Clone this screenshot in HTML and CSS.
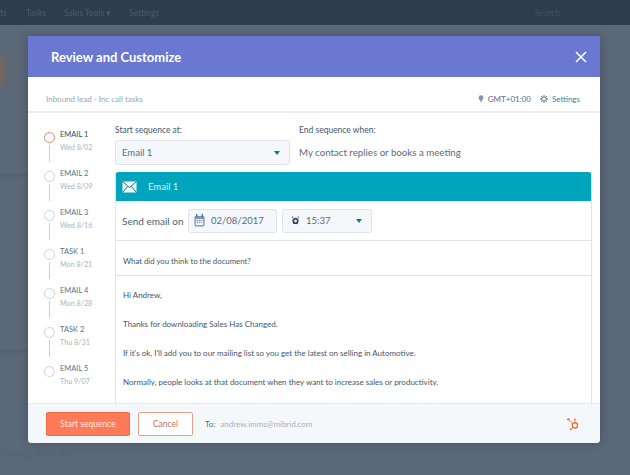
FILE: index.html
```html
<!DOCTYPE html>
<html lang="en">
<head>
  <meta charset="UTF-8">
  <title>Review and Customize</title>
  <link rel="stylesheet" href="styles.css">
</head>
<body>
  <div class="page">
    <div class="topnav">
      <span class="nav-cut">ts</span>
      <span>Tasks</span>
      <span>Sales Tools &#9662;</span>
      <span>Settings</span>
      <span class="nav-search">Search</span>
    </div>
    <div class="page-blob"></div>
    <div class="page-rule rule-one"></div>
    <div class="page-rule rule-two"></div>
    <div class="page-line">Contacts in this list</div>
  </div>

  <div class="modal">
    <div class="modal-head">
      <h1>Review and Customize</h1>
      <svg class="close" width="12" height="12" viewBox="0 0 12 12"><path d="M1 1l10 10M11 1L1 11" stroke="#fff" stroke-width="1.5" fill="none"/></svg>
    </div>

    <div class="subhead">
      <span class="sub-name">Inbound lead - Inc call tasks</span>
      <span class="sub-right">
        <svg width="6" height="8" viewBox="0 0 8 10"><path d="M4 0a3.200 3.200 0 0 1 3.200 3.200C7.200 5 5.500 6 5 7.500H3C2.500 6 .8 5 .8 3.200A3.200 3.200 0 0 1 4 0z" fill="#7c98b6"/><path d="M3 8.500h2" stroke="#7c98b6"/></svg>
        <span class="gmt">GMT+01:00</span>
        <svg width="8" height="8" viewBox="0 0 10 10"><circle cx="5" cy="5" r="2.800" fill="none" stroke="#33475b"/><path d="M5 0v2M5 8v2M0 5h2M8 5h2M1.500 1.500l1.300 1.300M7.200 7.200l1.300 1.300M8.500 1.500L7.200 2.800M2.800 7.200L1.500 8.500" stroke="#33475b" stroke-width=".9"/></svg>
        <a class="settings">Settings</a>
      </span>
    </div>

    <div class="modal-body">
      <ul class="timeline">
        <li class="step current"><span class="dot"></span><div><b>EMAIL 1</b><i>Wed 8/02</i></div></li>
        <li class="step"><span class="dot"></span><div><b>EMAIL 2</b><i>Wed 8/09</i></div></li>
        <li class="step"><span class="dot"></span><div><b>EMAIL 3</b><i>Wed 8/16</i></div></li>
        <li class="step"><span class="dot"></span><div><b>TASK 1</b><i>Mon 8/21</i></div></li>
        <li class="step"><span class="dot"></span><div><b>EMAIL 4</b><i>Mon 8/28</i></div></li>
        <li class="step"><span class="dot"></span><div><b>TASK 2</b><i>Thu 8/31</i></div></li>
        <li class="step last"><span class="dot"></span><div><b>EMAIL 5</b><i>Thu 9/07</i></div></li>
      </ul>

      <div class="main">
        <div class="options">
          <div class="opt-start">
            <label>Start sequence at:</label>
            <div class="field select-start">Email 1<span class="caret"></span></div>
          </div>
          <div class="opt-end">
            <label>End sequence when:</label>
            <div class="end-text">My contact replies or books a meeting</div>
          </div>
        </div>

        <div class="card">
          <div class="card-head">
            <svg width="15" height="12" viewBox="0 0 15 12"><rect x=".5" y=".5" width="14" height="11" rx="1" fill="#f4fbfc"/><path d="M1 1l6.500 5.500L14 1M1 11l4.500-5.500M14 11L9.500 5.500" stroke="#00788c" fill="none"/></svg>
            <span>Email 1</span>
          </div>
          <div class="send-row">
            <span class="send-label">Send email on</span>
            <div class="field date-field">
              <svg width="11" height="13" viewBox="0 0 12 14"><rect x=".5" y="2" width="11" height="11.500" rx="1.500" fill="#7c98b6"/><rect x="2" y="5.500" width="8" height="6.500" fill="#f5f8fa"/><path d="M3 0v3.500M9 0v3.500" stroke="#516f90" stroke-width="1.500"/><path d="M3 7h1.500M5.500 7H7M8 7h1M3 9h1.500M5.500 9H7M8 9h1" stroke="#516f90"/></svg>
              <span>02/08/2017</span>
            </div>
            <div class="field time-field">
              <svg width="9" height="9" viewBox="0 0 11 11"><circle cx="5.500" cy="6" r="3.800" fill="#33475b"/><circle cx="5.500" cy="6" r="1.800" fill="#dfe3eb"/><path d="M1 2l1.800-1.200M10 2L8.200.8M2.500 10l1-1M8.500 10l-1-1" stroke="#33475b" stroke-width="1.200"/></svg>
              <span>15:37</span><span class="caret"></span>
            </div>
          </div>
          <div class="subject">What did you think to the document?</div>
          <div class="letter">
            <p>Hi Andrew,</p>
            <p>Thanks for downloading Sales Has Changed.</p>
            <p>If it's ok, I'll add you to our mailing list so you get the latest on selling in Automotive.</p>
            <p>Normally, people looks at that document when they want to increase sales or productivity.</p>
          </div>
        </div>
      </div>
    </div>

    <div class="modal-foot">
      <button class="btn-start">Start sequence</button>
      <button class="btn-cancel">Cancel</button>
      <span class="to">To:</span>
      <span class="to-mail">andrew.imms@mibrid.com</span>
      <svg class="sprocket" width="13" height="14" viewBox="0 0 14 15"><circle cx="8.500" cy="9" r="2.800" fill="none" stroke="#e8743b" stroke-width="1.500"/><path d="M8.500 6V3M6.300 7L2 3.200M6.500 11l-2 1.800" stroke="#e8743b"/><circle cx="8.500" cy="2.500" r="1" fill="#e8743b"/><circle cx="1.500" cy="2.500" r="1.300" fill="#e8743b"/><circle cx="4" cy="13.200" r="1" fill="#e8743b"/></svg>
    </div>
  </div>
</body>
</html>
```

FILE: styles.css
```css
* {
  box-sizing: border-box;
}
html, body {
  height: 100%;
}
body {
  margin: 0;
  overflow: hidden;
  font-family: Lato, "Open Sans", sans-serif;
  background: #5b6878;
  color: #33475b;
}
.page {
  height: 475px;
  filter: blur(0.6px);
}
.topnav {
  height: 25px;
  background: #2e3d4e;
  display: flex;
  align-items: center;
  padding-left: 26px;
  gap: 18px;
  font-size: 8.5px;
  color: #4a5b6d;
  position: relative;
}
.nav-cut {
  position: absolute;
  left: 0;
}
.nav-search {
  margin-left: auto;
  margin-right: 70px;
  color: #425266;
}
.page-blob {
  position: absolute;
  left: -12px;
  top: 54px;
  width: 17px;
  height: 32px;
  border-radius: 50%;
  background: #7d6557;
  filter: blur(3px);
}
.page-rule {
  height: 2px;
  width: 28px;
  background: #505c6b;
  filter: blur(1px);
}
.rule-one {
  margin-top: 149px;
}
.rule-two {
  margin-top: 174px;
}
.page-line {
  margin-top: 97px;
  font-size: 8.5px;
  color: #55616f;
}

.modal {
  position: absolute;
  left: 28px;
  top: 36px;
  width: 572px;
  height: 407px;
  background: #fff;
  border-radius: 0 0 4px 4px;
  box-shadow: 0 0 8px rgba(30, 40, 55, 0.35);
  display: flex;
  flex-direction: column;
  overflow: hidden;
}
.modal-head {
  height: 41px;
  flex: none;
  background: #6a78d1;
  display: flex;
  align-items: center;
  justify-content: space-between;
  padding: 0 13px 0 23px;
}
.modal-head h1 {
  margin: 0;
  font-size: 13px;
  font-weight: 700;
  color: #fff;
}
.subhead {
  height: 36px;
  flex: none;
  border-bottom: 2px solid #eaeef2;
  display: flex;
  align-items: center;
  justify-content: space-between;
  padding: 10px 20px 0 18px;
  font-size: 8px;
}
.sub-name {
  color: #99a5b1;
}
.sub-right {
  display: flex;
  align-items: center;
  gap: 4px;
}
.gmt {
  color: #516f90;
  margin-right: 5px;
}
.settings {
  color: #1f8a9e;
}

.modal-body {
  flex: 1;
  min-height: 0;
  display: flex;
}
.timeline {
  width: 87px;
  flex: none;
  margin: 0;
  padding: 16px 0 0 16px;
  list-style: none;
}
.step {
  height: 39px;
  display: flex;
  gap: 5px;
  position: relative;
}
.step::after {
  content: "";
  position: absolute;
  left: 5px;
  top: 16px;
  height: 17px;
  border-left: 1px solid #c3ced9;
}
.step.last::after {
  display: none;
}
.dot {
  width: 11px;
  height: 11px;
  margin-top: 3px;
  flex: none;
  border: 1.5px solid #ccd2d8;
  border-radius: 50%;
}
.current .dot {
  border-color: #dc8d62;
}
.step div {
  margin-top: -1px;
}
.step b {
  display: block;
  font-weight: 400;
  font-size: 7.5px;
  line-height: 13px;
  white-space: nowrap;
  color: #5f6f7f;
}
.current b {
  color: #33475b;
}
.step i {
  display: block;
  font-style: normal;
  font-size: 7.2px;
  line-height: 14px;
  white-space: nowrap;
  color: #a9b4be;
}

.main {
  flex: 1;
  min-width: 0;
  padding: 12px 8px 0 0;
  display: flex;
  flex-direction: column;
}
.options {
  display: flex;
  gap: 9px;
  height: 47px;
  flex: none;
}
.opt-start {
  width: 175px;
}
.options label {
  display: block;
  font-size: 8.5px;
  line-height: 11px;
  margin-bottom: 4px;
  color: #44566a;
}
.field {
  display: flex;
  align-items: center;
  background: #f5f8fa;
  border: 1px solid #dfe3eb;
  border-radius: 3px;
  font-size: 9.5px;
  color: #5a6b7b;
}
.select-start {
  height: 25px;
  padding: 0 6px;
  justify-content: space-between;
}
.end-text {
  font-size: 9.7px;
  line-height: 25px;
  color: #5a6b7b;
}
.caret {
  width: 0;
  height: 0;
  border-left: 3.5px solid transparent;
  border-right: 3.5px solid transparent;
  border-top: 4px solid #00818f;
  margin-right: 3px;
}
.card {
  flex: 1;
  min-height: 0;
  border-left: 1px solid #dfe3eb;
  border-right: 1px solid #dfe3eb;
  overflow: hidden;
}
.card-head {
  height: 29px;
  margin: 0 -1px;
  background: #00a4bd;
  border-radius: 4px 4px 0 0;
  display: flex;
  align-items: center;
  gap: 11px;
  padding-left: 7px;
  font-size: 9.5px;
  color: #d3f6fa;
}
.send-row {
  height: 40px;
  display: flex;
  align-items: center;
  padding-left: 6px;
  border-bottom: 1px solid #dfe3eb;
}
.send-label {
  width: 66px;
  font-size: 10px;
  color: #4c5f72;
}
.date-field {
  width: 89px;
  height: 24px;
  padding-left: 5px;
  gap: 6px;
}
.time-field {
  width: 90px;
  height: 24px;
  margin-left: 5px;
  padding-left: 8px;
  gap: 6px;
}
.time-field .caret {
  margin-left: auto;
  margin-right: 9px;
}
.subject {
  height: 35px;
  padding: 14px 0 0 7px;
  font-size: 7.8px;
  line-height: 12px;
  color: #44566a;
  border-bottom: 1px solid #dfe3eb;
}
.letter {
  padding: 13px 0 0 7px;
  font-size: 8px;
  line-height: 12px;
  color: #44566a;
}
.letter p {
  margin: 0 0 17px;
  white-space: nowrap;
}

.modal-foot {
  height: 40px;
  flex: none;
  background: #f5f8fa;
  border-top: 1px solid #e4e9ef;
  display: flex;
  align-items: center;
  padding: 0 18px;
  font-size: 8px;
}
.modal-foot button {
  height: 24px;
  border-radius: 2px;
  font-family: inherit;
  font-size: 8.5px;
  padding: 0;
}
.btn-start {
  width: 84px;
  background: #ff7a59;
  border: 1px solid #f5693f;
  color: #ffe6df;
}
.btn-cancel {
  width: 55px;
  margin-left: 8px;
  background: #fff;
  border: 1px solid #e3a08c;
  color: #c9705a;
}
.to {
  margin-left: 12px;
  color: #516f90;
}
.to-mail {
  margin-left: 5px;
  color: #a5b1bd;
}
.sprocket {
  margin-left: auto;
  margin-right: 2px;
}
```
